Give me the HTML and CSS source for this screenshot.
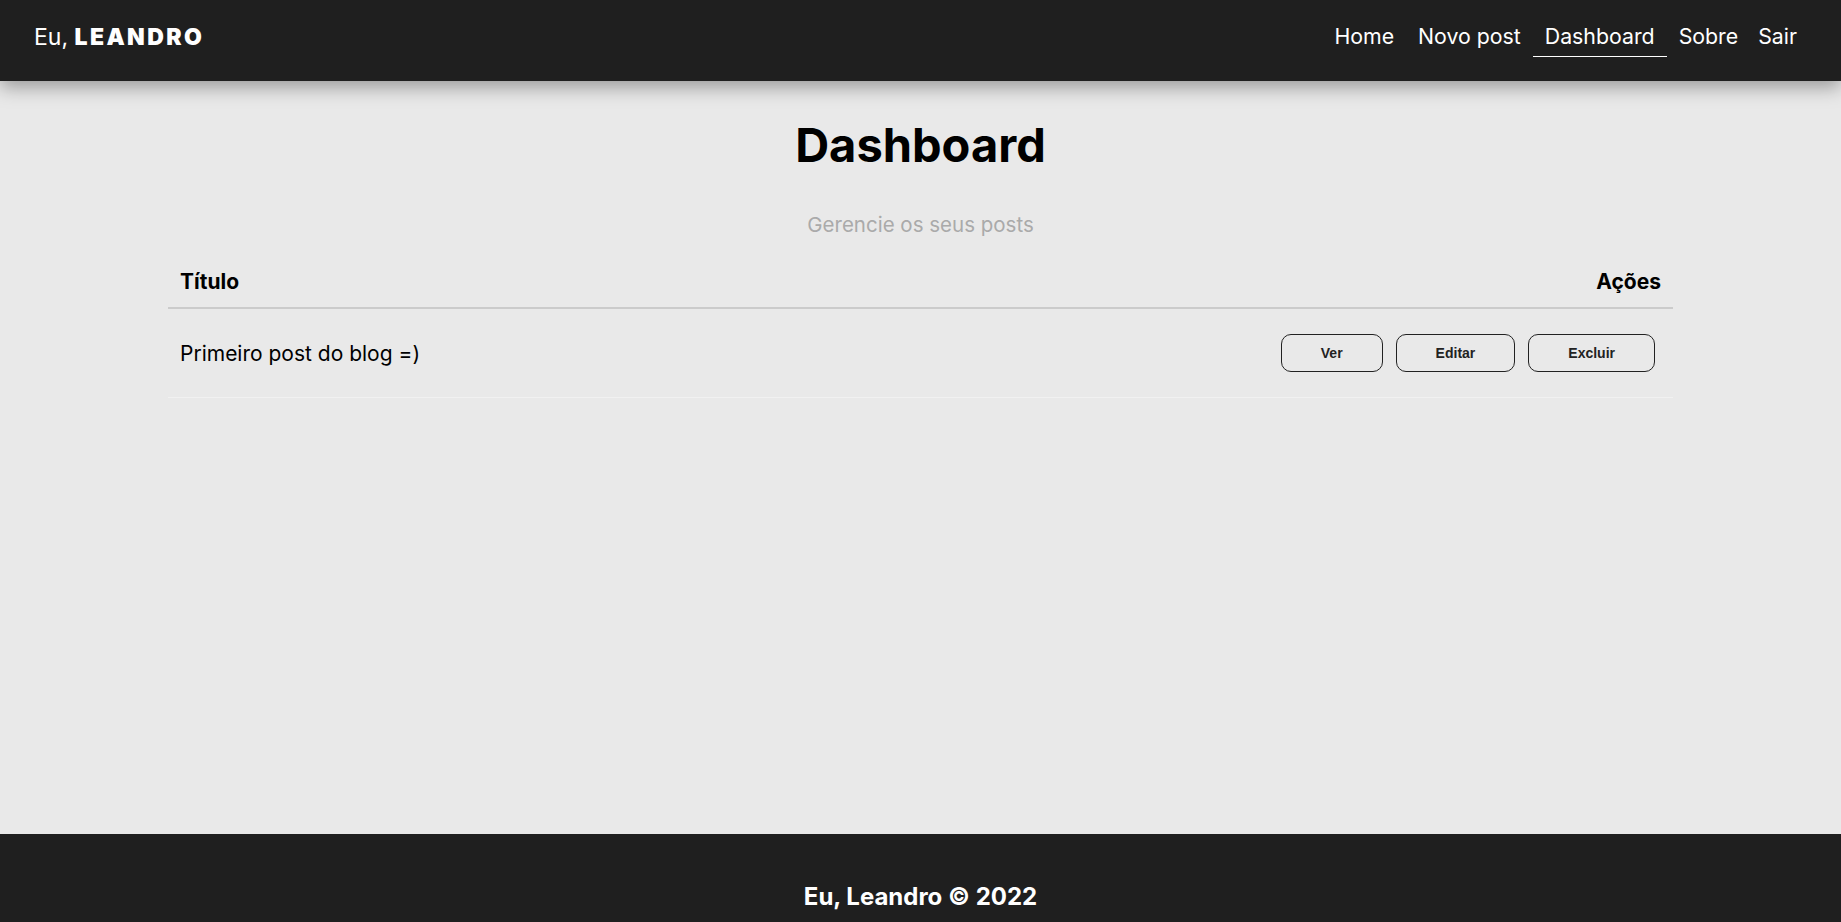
FILE: index.html
```html
<!DOCTYPE html>
<html lang="pt-BR">
<head>
<meta charset="utf-8">
<title>Dashboard</title>
<link rel="stylesheet" href="styles.css">
</head>
<body>
<div class="app">
  <nav class="navbar">
    <a class="brand" href="#">Eu, <span>LEANDRO</span></a>
    <ul class="links">
      <li><a href="#">Home</a></li>
      <li><a href="#">Novo post</a></li>
      <li><a href="#" class="active">Dashboard</a></li>
      <li><a href="#">Sobre</a></li>
      <li><button class="logout">Sair</button></li>
    </ul>
  </nav>
  <main class="container">
    <h1 class="title">Dashboard</h1>
    <p class="subtitle">Gerencie os seus posts</p>
    <div class="table">
      <div class="row head">
        <span>Título</span>
        <span>Ações</span>
      </div>
      <div class="row item">
        <p class="post-title">Primeiro post do blog =)</p>
        <div class="actions">
          <a href="#" class="btn">Ver</a>
          <a href="#" class="btn">Editar</a>
          <button class="btn">Excluir</button>
        </div>
      </div>
    </div>
  </main>
  <footer class="footer">
    <h3>Eu, Leandro &copy; 2022</h3>
  </footer>
</div>
</body>
</html>
```

FILE: styles.css
```css
* { box-sizing: border-box; }
body {
  margin: 0;
  background: #e9e9e9;
  font-family: Inter, "Noto Sans", sans-serif;
  color: #000;
}
.app { min-height: 100vh; display: flex; flex-direction: column; }
.navbar {
  height: 81px;
  flex-shrink: 0;
  background: #1f1f1f;
  display: flex;
  align-items: center;
  justify-content: space-between;
  padding: 0 36px 0 34px;
  box-shadow: 0 6px 18px rgba(0,0,0,.35);
  position: relative;
  z-index: 1;
}
.brand {
  color: #fff;
  text-decoration: none;
  font-size: 23px;
  line-height: 28px;
  padding-bottom: 8px;
}
.brand span { font-weight: 900; letter-spacing: 2.4px; }
.links {
  list-style: none;
  margin: 0;
  padding: 0;
  display: flex;
  align-items: center;
}
.links a,
.logout {
  color: #fff;
  text-decoration: none;
  font-family: inherit;
  font-size: 21.3px;
  line-height: 25px;
  padding: 0 12px 7px;
  display: block;
  border: none;
  border-bottom: 1px solid transparent;
  background: none;
}
.links a.active { border-bottom-color: #fff; }
.logout { padding: 0 8px 7px; cursor: pointer; }
.container {
  flex: 1;
  display: flex;
  flex-direction: column;
  align-items: center;
  padding-top: 35px;
}
.title {
  margin: 0;
  font-size: 47px;
  font-weight: 700;
  line-height: 57px;
}
.subtitle {
  margin: 39px 0 0;
  color: #aaa;
  font-size: 20.5px;
  line-height: 25px;
}
.table { width: 1505px; margin-top: 18px; }
.row {
  display: flex;
  justify-content: space-between;
  align-items: center;
}
.head {
  padding: 14px 12px 13px;
  line-height: 25px;
  font-weight: 700;
  font-size: 21px;
  border-bottom: 2px solid #cbcbcb;
}
.item {
  height: 89px;
  padding: 0 12px;
  border-bottom: 1px solid #f1f1f1;
}
.post-title { margin: 0; font-size: 21px; line-height: 25px; }
.actions { display: flex; gap: 13px; margin-right: 6px; }
.btn {
  display: block;
  height: 38px;
  line-height: 36px;
  padding: 0 39px;
  border: 1px solid #222;
  border-radius: 10px;
  background: transparent;
  color: #222;
  font-family: "Liberation Sans", Arial, sans-serif;
  font-size: 14px;
  font-weight: 700;
  text-decoration: none;
  cursor: pointer;
}
.footer {
  background: #1f1f1f;
  color: #fff;
  height: 88px;
  flex-shrink: 0;
  display: flex;
  justify-content: center;
  padding-top: 48px;
}
.footer h3 { margin: 0; font-size: 24px; line-height: 29px; font-weight: 700; }
```
